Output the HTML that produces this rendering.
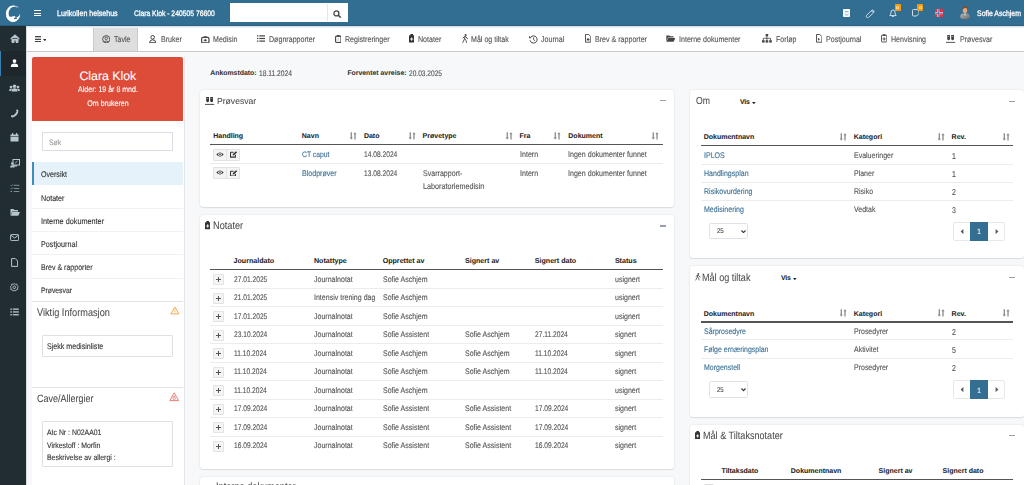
<!DOCTYPE html><html><head><meta charset="utf-8"><style>
html,body{margin:0;padding:0}
body{width:1024px;height:485px;overflow:hidden;position:relative;background:#f6f8fa;font-family:"Liberation Sans",sans-serif;text-rendering:geometricPrecision}
.t{position:absolute;white-space:nowrap;-webkit-text-stroke:0.12px currentColor}
.b{-webkit-text-stroke:0.05px currentColor}
.r{position:absolute;box-sizing:border-box}
</style></head><body>
<div class="r" style="left:0.00px;top:0.00px;width:1024.00px;height:26.00px;background:#326d92"></div>
<div class="r" style="left:0.00px;top:25.40px;width:1024.00px;height:1.20px;background:#285d80"></div>
<svg class="r" style="left:2px;top:2px" width="22" height="22" viewBox="2 2 22 22">
<defs><mask id="lm"><rect x="2" y="2" width="22" height="22" fill="#fff"/><path d="M13 13.6 L15.5 2 L26 2 L26 15 Z" fill="#000"/></mask>
<clipPath id="lc"><ellipse cx="13" cy="13.8" rx="7.1" ry="8.2"/></clipPath></defs>
<path fill="#fff" fill-rule="evenodd" mask="url(#lm)" d="M5.9 13.8 A7.1 8.2 0 1 0 20.1 13.8 A7.1 8.2 0 1 0 5.9 13.8Z M8.6 13.4 A5.5 6.7 0 1 0 19.6 13.4 A5.5 6.7 0 1 0 8.6 13.4Z"/>
<path fill="#fff" opacity="0.55" d="M13 5.6 Q16.5 5.6 18.6 7 L18.2 7.8 Q16 6.6 13 7Z"/>
<g clip-path="url(#lc)"><path fill="#fff" d="M4 16.6 Q6.5 16 9 16.6 Q11 17 13 16.2 Q14.5 15.7 15.5 16.6 L14.8 17.4 Q16.6 17.8 18.6 16.2 L20.5 14.8 L22 24 L4 24Z"/></g>
<ellipse cx="15.6" cy="18.3" rx="1.7" ry="0.75" fill="#346e93" transform="rotate(-12 15.6 18.3)"/>
</svg>
<div class="r" style="left:34.00px;top:10.00px;width:7.00px;height:1.20px;background:#fff"></div>
<div class="r" style="left:34.00px;top:12.60px;width:7.00px;height:1.20px;background:#fff"></div>
<div class="r" style="left:34.00px;top:15.20px;width:7.00px;height:1.20px;background:#fff"></div>
<div class="t" style="left:57.00px;top:9.20px;font-size:8.236px;line-height:10px;color:#fff;font-weight:normal;letter-spacing:0px;transform:scaleX(0.8621);transform-origin:0 50%;-webkit-text-stroke:0.3px #fff">Lurikollen helsehus</div>
<div class="t" style="left:134.00px;top:9.20px;font-size:7.888px;line-height:10px;color:#fff;font-weight:normal;letter-spacing:0px;transform:scaleX(0.8621);transform-origin:0 50%;-webkit-text-stroke:0.3px #fff">Clara Klok - 240505 76600</div>
<div class="r" style="left:230.00px;top:3.00px;width:118.00px;height:19.00px;background:#fff"></div>
<div class="r" style="left:326.50px;top:4.00px;width:0.80px;height:17.00px;background:#e6e6e6"></div>
<svg class="r" style="left:333.00px;top:9.50px;" width="9" height="8" viewBox="0 0 9 8"><circle cx="3.4" cy="3.4" r="2.5" fill="none" stroke="#444" stroke-width="1.3"/><path d="M5.2 5.2 L7.8 7.6" stroke="#444" stroke-width="1.5"/></svg>
<svg class="r" style="left:843.00px;top:9.00px;" width="7.2" height="8" viewBox="0 0 7.2 8"><rect x="0" y="0" width="7.2" height="7.9" rx="1" fill="#fff"/><rect x="2" y="2" width="3.5" height="1.1" fill="#8fb0c6"/><rect x="2" y="5.4" width="3.5" height="1" fill="#8fb0c6"/><rect x="0" y="3.9" width="7.2" height="0.5" fill="#c9d9e4"/></svg>
<svg class="r" style="left:864.50px;top:8.50px;" width="10" height="9" viewBox="0 0 10 9"><path d="M1.6 6.3 L6 1.9 Q7 0.6 8.3 1.2 L7 2.6 L7.6 3.2 L8.8 1.9 Q9.4 3.3 8 4.2 L3.6 8.4 Q2.6 9.2 1.6 8.3 Q0.8 7.3 1.6 6.3Z" fill="none" stroke="#dfe8ee" stroke-width="0.9"/></svg>
<svg class="r" style="left:888.50px;top:8.80px;" width="8" height="8.5" viewBox="0 0 8 8.5"><path d="M0.8 6.6 Q1.9 5.6 1.9 3.8 Q1.9 0.9 4 0.9 Q6.1 0.9 6.1 3.8 Q6.1 5.6 7.2 6.6 Z" fill="none" stroke="#e5edf2" stroke-width="0.9"/><circle cx="4" cy="7.6" r="0.8" fill="#e5edf2"/></svg>
<div class="r" style="left:894.70px;top:4.10px;width:6.10px;height:6.70px;background:#f39c12;border-radius:1px"></div>
<svg class="r" style="left:896.30px;top:5.60px;" width="3" height="3.6" viewBox="0 0 3 3.6"><ellipse cx="1.5" cy="1.8" rx="1" ry="1.3" fill="none" stroke="#fff" stroke-width="0.8"/></svg>
<svg class="r" style="left:911.80px;top:9.00px;" width="7.5" height="7.5" viewBox="0 0 7.5 7.5"><path d="M1.5 0.5 H6 Q7 0.5 7 1.5 V4.6 L4.6 7 H1.5 Q0.5 7 0.5 6 V1.5 Q0.5 0.5 1.5 0.5Z" fill="none" stroke="#e5edf2" stroke-width="0.9"/></svg>
<div class="r" style="left:917.10px;top:4.10px;width:6.00px;height:6.70px;background:#f39c12;border-radius:1px"></div>
<svg class="r" style="left:918.60px;top:5.60px;" width="3" height="3.6" viewBox="0 0 3 3.6"><ellipse cx="1.5" cy="1.8" rx="1" ry="1.3" fill="none" stroke="#fff" stroke-width="0.8"/></svg>
<svg class="r" style="left:934.80px;top:8.80px;" width="8.2" height="8.3" viewBox="0 0 8.2 8.3"><rect width="8.2" height="8.3" fill="#ef2a44"/><rect x="2.2" y="0" width="2" height="8.3" fill="#fff"/><rect x="0" y="3.2" width="8.2" height="2" fill="#fff"/><rect x="2.8" y="0" width="0.8" height="8.3" fill="#2a3f80"/><rect x="0" y="3.8" width="8.2" height="0.8" fill="#2a3f80"/></svg>
<svg class="r" style="left:960.40px;top:6.00px;" width="10" height="13" viewBox="0 0 10 13"><defs><linearGradient id="suit" x1="0" y1="0" x2="1" y2="1"><stop offset="0" stop-color="#b5b5b5"/><stop offset="1" stop-color="#6e6e6e"/></linearGradient></defs>
<path d="M0.2 11 Q0.2 7.6 3 7.2 L5 8.5 L7 7.2 Q9.8 7.6 9.8 11 Q9.8 13 5 13 Q0.2 13 0.2 11Z" fill="url(#suit)"/><path d="M4 7.6 L5 10 L6 7.6Z" fill="#e8e8e8"/>
<ellipse cx="5" cy="4.2" rx="2.2" ry="2.9" fill="#eaa77c"/><path d="M2.6 3.9 Q2.4 0.2 5.3 0.3 Q8.2 0.5 7.6 3.6 Q7.2 2 5.4 2.1 Q3.4 2 2.6 3.9Z" fill="#8b4a22"/></svg>
<div class="t" style="left:977.00px;top:9.40px;font-size:8.062px;line-height:10px;color:#fff;font-weight:normal;letter-spacing:0px;transform:scaleX(0.8621);transform-origin:0 50%;-webkit-text-stroke:0.3px #fff">Sofie Aschjem</div>
<div class="r" style="left:0.00px;top:26.00px;width:26.00px;height:459.00px;background:#222d32"></div>
<div class="r" style="left:0.00px;top:50.80px;width:26.00px;height:25.20px;background:#1e282c"></div>
<div class="r" style="left:0.00px;top:50.80px;width:1.30px;height:25.20px;background:#3580b0"></div>
<div class="r" style="left:26.00px;top:26.00px;width:1.30px;height:459.00px;background:#d9dcdf"></div>
<svg class="r" style="left:9.70px;top:34.20px;" width="10" height="9" viewBox="0 0 10 9"><path d="M0.5 4.8 L5 0.8 L9.5 4.8 M2 4 V8.5 H4 V6 H6 V8.5 H8 V4" fill="#b8c7ce" stroke="#b8c7ce" stroke-width="1"/></svg>
<svg class="r" style="left:10.20px;top:58.80px;" width="9" height="9" viewBox="0 0 9 9"><circle cx="4.5" cy="2.1" r="1.9" fill="#fff"/><path d="M0.8 7.9 Q0.8 4.6 4.5 4.6 Q8.2 4.6 8.2 7.9Z" fill="#fff"/></svg>
<svg class="r" style="left:9.20px;top:84.20px;" width="11" height="8" viewBox="0 0 11 8"><circle cx="5.5" cy="2.2" r="1.8" fill="#b8c7ce"/><circle cx="2" cy="3" r="1.3" fill="#b8c7ce"/><circle cx="9" cy="3" r="1.3" fill="#b8c7ce"/><path d="M2.5 7.5 Q2.5 4.3 5.5 4.3 Q8.5 4.3 8.5 7.5Z M0 7 Q0 4.5 2 4.5 L3 4.8 L1.8 7Z M11 7 Q11 4.5 9 4.5 L8 4.8 L9.2 7Z" fill="#b8c7ce"/></svg>
<svg class="r" style="left:10.20px;top:108.60px;" width="9" height="9" viewBox="0 0 9 9"><path d="M1 7.5 Q0.8 6.6 1.8 6 L3 6.6 Q5.5 5 6.7 2.6 L6 1.2 Q6.6 0.3 7.6 0.6 Q9 1.6 8 4 Q6 7.8 2.3 8.6 Q1.4 8.6 1 7.5Z" fill="#b8c7ce"/></svg>
<svg class="r" style="left:10.20px;top:133.30px;" width="9" height="9" viewBox="0 0 9 9"><rect x="0.5" y="1.5" width="8" height="7" fill="#b8c7ce"/><rect x="2" y="0" width="1.2" height="2" fill="#b8c7ce"/><rect x="6" y="0" width="1.2" height="2" fill="#b8c7ce"/><rect x="0.5" y="3" width="8" height="0.6" fill="#222d32"/></svg>
<svg class="r" style="left:9.70px;top:158.60px;" width="10" height="9" viewBox="0 0 10 9"><rect x="3" y="0.5" width="6.5" height="5.5" fill="none" stroke="#b8c7ce" stroke-width="1"/><circle cx="2.3" cy="4.5" r="1.3" fill="#b8c7ce"/><path d="M0 8.5 Q0 6.2 2.3 6.2 L7 6.2 L7 7.5 L4.5 7.5 L4.5 8.5Z" fill="#b8c7ce"/><path d="M5 4.3 L7.5 2" stroke="#b8c7ce" stroke-width="0.8"/></svg>
<svg class="r" style="left:9.70px;top:183.50px;" width="10" height="8" viewBox="0 0 10 8"><path d="M0.5 1 L1.5 2 L3 0.3 M0.5 4.2 L1.5 5.2 L3 3.5" fill="none" stroke="#8a9aa3" stroke-width="0.7"/><rect x="3.8" y="0.8" width="5.5" height="0.9" fill="#8a9aa3"/><rect x="3.8" y="4" width="5.5" height="0.9" fill="#8a9aa3"/><rect x="0.5" y="7" width="1.6" height="1" fill="#8a9aa3"/><rect x="3.8" y="7" width="5.5" height="0.9" fill="#8a9aa3"/></svg>
<svg class="r" style="left:9.70px;top:208.00px;" width="10" height="8" viewBox="0 0 10 8"><path d="M0.5 1 H3.5 L4.5 2 H8 V3.5 H2.2 L0.5 7.5Z" fill="#b8c7ce"/><path d="M2.4 4 H10 L8.3 7.8 H0.6Z" fill="#b8c7ce"/></svg>
<svg class="r" style="left:10.20px;top:233.80px;" width="9" height="7" viewBox="0 0 9 7"><rect x="0.6" y="0.6" width="8" height="6" rx="0.8" fill="none" stroke="#b8c7ce" stroke-width="1"/><path d="M0.8 1.2 L4.6 4 L8.4 1.2" fill="none" stroke="#b8c7ce" stroke-width="1"/></svg>
<svg class="r" style="left:11.20px;top:257.70px;" width="7" height="9" viewBox="0 0 7 9"><path d="M0.6 0.6 H4.3 L6.6 2.9 V8.4 H0.6Z" fill="none" stroke="#b8c7ce" stroke-width="1"/></svg>
<svg class="r" style="left:10.20px;top:282.50px;" width="9" height="9" viewBox="0 0 9 9"><circle cx="4.3" cy="4.3" r="1.3" fill="none" stroke="#b8c7ce" stroke-width="0.9"/><path d="M4.3 0.5 L5.3 1.3 L6.8 1.1 L7.2 2.6 L8.2 3.6 L7.5 4.9 L7.7 6.4 L6.2 6.9 L5.2 8 L4.3 7.3 L3.1 8 L2.2 6.9 L0.8 6.4 L1 4.9 L0.4 3.6 L1.4 2.6 L1.8 1.1 L3.3 1.3Z" fill="none" stroke="#b8c7ce" stroke-width="0.9"/></svg>
<svg class="r" style="left:10.20px;top:308.00px;" width="9" height="8" viewBox="0 0 9 8"><rect x="0.3" y="0.5" width="1.6" height="1.3" fill="#b8c7ce"/><rect x="2.8" y="0.5" width="6" height="1.3" fill="#b8c7ce"/><rect x="0.3" y="3.3" width="1.6" height="1.3" fill="#b8c7ce"/><rect x="2.8" y="3.3" width="6" height="1.3" fill="#b8c7ce"/><rect x="0.3" y="6.1" width="1.6" height="1.3" fill="#b8c7ce"/><rect x="2.8" y="6.1" width="6" height="1.3" fill="#b8c7ce"/></svg>
<div class="r" style="left:27.30px;top:26.00px;width:996.70px;height:24.60px;background:#fff"></div>
<div class="r" style="left:27.30px;top:26.00px;width:996.70px;height:1.60px;background:linear-gradient(#d5dde3,#f4f6f8)"></div>
<div class="r" style="left:27.30px;top:50.60px;width:996.70px;height:1.40px;background:#c6c6c6"></div>
<div class="r" style="left:27.30px;top:52.00px;width:996.70px;height:1.20px;background:#fafbfc"></div>
<div class="r" style="left:93.20px;top:27.60px;width:45.00px;height:23.00px;background:#dedede;border-left:1px solid #cbcbcb;border-right:1px solid #cbcbcb"></div>
<div class="r" style="left:34.90px;top:36.00px;width:6.60px;height:1.00px;background:#444"></div>
<div class="r" style="left:34.90px;top:38.80px;width:6.60px;height:1.00px;background:#444"></div>
<div class="r" style="left:34.90px;top:41.00px;width:6.60px;height:1.00px;background:#444"></div>
<div class="r" style="left:34.90px;top:37.20px;width:6.60px;height:1.40px;background:#c8c8c8"></div>
<svg class="r" style="left:42.90px;top:38.90px;" width="3.6" height="2.4" viewBox="0 0 3.6 2.4"><path d="M0 0 H3.6 L1.8 2.2Z" fill="#333"/></svg>
<svg class="r" style="left:101.80px;top:34.60px;" width="8.5" height="8.5" viewBox="0 0 8.5 8.5"><circle cx="4.2" cy="4.2" r="3.6" fill="none" stroke="#444" stroke-width="0.9"/><circle cx="4.2" cy="3.3" r="1.3" fill="none" stroke="#444" stroke-width="0.8"/><path d="M1.9 6.9 Q4.2 4.9 6.5 6.9" fill="none" stroke="#444" stroke-width="0.8"/></svg>
<div class="t" style="left:113.60px;top:35.30px;font-size:8.236px;line-height:10px;color:#555;font-weight:normal;letter-spacing:0px;transform:scaleX(0.8621);transform-origin:0 50%;">Tavle</div>
<svg class="r" style="left:149.40px;top:34.70px;" width="7.5" height="8.2" viewBox="0 0 7.5 8.2"><circle cx="3.7" cy="2.3" r="1.8" fill="none" stroke="#444" stroke-width="1"/><path d="M0.6 7.7 Q0.6 4.8 3.7 4.8 Q6.8 4.8 6.8 7.7Z" fill="none" stroke="#444" stroke-width="1"/></svg>
<div class="t" style="left:160.50px;top:35.30px;font-size:8.236px;line-height:10px;color:#555;font-weight:normal;letter-spacing:0px;transform:scaleX(0.8621);transform-origin:0 50%;">Bruker</div>
<svg class="r" style="left:201.20px;top:35.60px;" width="8.6" height="7.6" viewBox="0 0 8.6 7.6"><rect x="0.65" y="1.45" width="7.3" height="5.5" rx="1.3" fill="none" stroke="#444" stroke-width="1.2"/><rect x="2.9" y="0.2" width="2.8" height="1.4" rx="0.4" fill="#444"/><path d="M4.3 3 V5.4 M2.7 4.2 H5.9" stroke="#444" stroke-width="1.1"/></svg>
<div class="t" style="left:213.20px;top:35.30px;font-size:8.236px;line-height:10px;color:#555;font-weight:normal;letter-spacing:0px;transform:scaleX(0.8621);transform-origin:0 50%;">Medisin</div>
<svg class="r" style="left:257.20px;top:34.90px;" width="8" height="7" viewBox="0 0 8 7"><g fill="#444"><rect x="0" y="0.3" width="1.4" height="1.2"/><rect x="2.3" y="0.3" width="5.7" height="1.2"/><rect x="0" y="2.9" width="1.4" height="1.2"/><rect x="2.3" y="2.9" width="5.7" height="1.2"/><rect x="0" y="5.5" width="1.4" height="1.2"/><rect x="2.3" y="5.5" width="5.7" height="1.2"/></g></svg>
<div class="t" style="left:268.90px;top:35.30px;font-size:8.236px;line-height:10px;color:#555;font-weight:normal;letter-spacing:0px;transform:scaleX(0.8621);transform-origin:0 50%;">Døgnrapporter</div>
<svg class="r" style="left:334.80px;top:34.90px;" width="6.6" height="8.1" viewBox="0 0 6.6 8.1"><rect x="0.6" y="1.1" width="5.4" height="6.4" rx="1" fill="none" stroke="#444" stroke-width="1.15"/><rect x="2" y="0" width="2.6" height="1.7" rx="0.5" fill="#444"/><path d="M3.3 3.2 V5.6" stroke="#999" stroke-width="0.6" fill="none"/><path d="M2 6.2 H4.6" stroke="#ccc" stroke-width="0.6"/></svg>
<div class="t" style="left:345.40px;top:35.30px;font-size:8.236px;line-height:10px;color:#555;font-weight:normal;letter-spacing:0px;transform:scaleX(0.8621);transform-origin:0 50%;">Registreringer</div>
<svg class="r" style="left:408.60px;top:34.40px;" width="5.5" height="8.7" viewBox="0 0 5.5 8.7"><rect x="0" y="1.3" width="5.4" height="7.3" rx="0.6" fill="#333"/><rect x="1.4" y="0" width="2.6" height="2" fill="#333"/><path d="M2.7 3.4 V6.8 M1.2 5.1 H4.2" stroke="#fff" stroke-width="0.9"/></svg>
<div class="t" style="left:418.40px;top:35.30px;font-size:8.236px;line-height:10px;color:#555;font-weight:normal;letter-spacing:0px;transform:scaleX(0.8621);transform-origin:0 50%;">Notater</div>
<svg class="r" style="left:461.80px;top:34.30px;" width="6.5" height="9" viewBox="0 0 6.5 9"><circle cx="3.6" cy="1.1" r="1" fill="#444"/><path d="M3.2 2.5 L2.3 5.4 L0.6 8.8 M2.6 4.4 L3.9 6.3 L4.6 8.8 M0.8 4.3 L2.2 2.8 L4 2.7 L5.2 4.6 L6.2 4.8" fill="none" stroke="#444" stroke-width="0.9"/></svg>
<div class="t" style="left:471.10px;top:35.30px;font-size:8.236px;line-height:10px;color:#555;font-weight:normal;letter-spacing:0px;transform:scaleX(0.8621);transform-origin:0 50%;">Mål og tiltak</div>
<svg class="r" style="left:529.00px;top:35.10px;" width="9" height="8.5" viewBox="0 0 9 8.5"><path d="M1.7 2.2 A3.6 3.6 0 1 1 1 5.3" fill="none" stroke="#444" stroke-width="1"/><path d="M0.2 0.8 L2.5 3.3 L0 3.2Z" fill="#444"/><path d="M4.6 2.4 V4.6 L6 5.8" fill="none" stroke="#444" stroke-width="0.9"/></svg>
<div class="t" style="left:541.20px;top:35.30px;font-size:8.236px;line-height:10px;color:#555;font-weight:normal;letter-spacing:0px;transform:scaleX(0.8621);transform-origin:0 50%;">Journal</div>
<svg class="r" style="left:584.80px;top:34.30px;" width="6.3" height="8.7" viewBox="0 0 6.3 8.7"><path d="M0.5 0.5 H3.7 L5.8 2.6 V8.2 H0.5Z" fill="none" stroke="#444" stroke-width="0.9"/><rect x="1.8" y="4.5" width="2.6" height="2" fill="#444"/></svg>
<div class="t" style="left:595.00px;top:35.30px;font-size:8.236px;line-height:10px;color:#555;font-weight:normal;letter-spacing:0px;transform:scaleX(0.8621);transform-origin:0 50%;">Brev &amp; rapporter</div>
<svg class="r" style="left:665.80px;top:35.10px;" width="9.5" height="7" viewBox="0 0 9.5 7"><path d="M0.3 0.4 H3.3 L4.2 1.3 H7.5 V2.5 H2 L0.3 6.5Z" fill="#444"/><path d="M2.2 3 H9.4 L7.6 6.7 H0.4Z" fill="#444"/></svg>
<div class="t" style="left:679.20px;top:35.30px;font-size:8.236px;line-height:10px;color:#555;font-weight:normal;letter-spacing:0px;transform:scaleX(0.8621);transform-origin:0 50%;">Interne dokumenter</div>
<svg class="r" style="left:761.80px;top:34.40px;" width="10" height="8.7" viewBox="0 0 10 8.7"><g fill="#444"><rect x="3.6" y="0" width="2.6" height="2.4"/><rect x="0" y="6.2" width="2.6" height="2.4"/><rect x="3.6" y="6.2" width="2.6" height="2.4"/><rect x="7.2" y="6.2" width="2.6" height="2.4"/></g><path d="M4.9 2.4 V6.2 M1.3 6.2 V4.3 H8.5 V6.2" fill="none" stroke="#444" stroke-width="0.8"/></svg>
<div class="t" style="left:775.70px;top:35.30px;font-size:8.236px;line-height:10px;color:#555;font-weight:normal;letter-spacing:0px;transform:scaleX(0.8621);transform-origin:0 50%;">Forløp</div>
<svg class="r" style="left:815.50px;top:34.30px;" width="6.5" height="8.7" viewBox="0 0 6.5 8.7"><path d="M0.5 0.5 H3.8 L5.9 2.6 V8.2 H0.5Z" fill="none" stroke="#444" stroke-width="0.9"/><path d="M2 3.8 L4 5.3 L2 6.8Z" fill="#444"/></svg>
<div class="t" style="left:825.80px;top:35.30px;font-size:8.236px;line-height:10px;color:#555;font-weight:normal;letter-spacing:0px;transform:scaleX(0.8621);transform-origin:0 50%;">Postjournal</div>
<svg class="r" style="left:881.00px;top:34.40px;" width="6.3" height="8.5" viewBox="0 0 6.3 8.5"><rect x="0.5" y="1.2" width="5.3" height="6.8" rx="0.6" fill="none" stroke="#444" stroke-width="0.9"/><rect x="1.8" y="0.3" width="2.7" height="1.6" fill="#444"/><path d="M3.15 3.3 V6.6 M1.6 4.95 H4.7" stroke="#444" stroke-width="0.9"/></svg>
<div class="t" style="left:891.40px;top:35.30px;font-size:8.236px;line-height:10px;color:#555;font-weight:normal;letter-spacing:0px;transform:scaleX(0.8621);transform-origin:0 50%;">Henvisning</div>
<svg class="r" style="left:946.10px;top:34.50px;" width="10" height="9" viewBox="0 0 10 9"><g fill="#444"><path d="M1.2 0 H4 V4.3 Q2.6 6.3 1.2 4.3Z"/><path d="M5.2 0 H8 V4.3 Q6.6 6.3 5.2 4.3Z"/><rect x="0" y="6.9" width="9.2" height="0.9"/></g><rect x="1.8" y="1.2" width="1.6" height="0.7" fill="#fff" opacity="0.6"/><rect x="5.8" y="1.2" width="1.6" height="0.7" fill="#fff" opacity="0.6"/></svg>
<div class="t" style="left:959.70px;top:35.30px;font-size:8.236px;line-height:10px;color:#555;font-weight:normal;letter-spacing:0px;transform:scaleX(0.8621);transform-origin:0 50%;">Prøvesvar</div>
<div class="r" style="left:32.00px;top:57.00px;width:152.80px;height:433.00px;background:#fff;border-right:1.6px solid #e4e6ea"></div>
<div class="r" style="left:32.00px;top:57.00px;width:151.20px;height:63.80px;background:#dd4b39;border-radius:2px 2px 0 0"></div>
<div class="t" style="left:-42.20px;width:300px;text-align:center;top:68.58px;font-size:12.300px;line-height:14px;color:#fff;font-weight:normal;letter-spacing:0px;transform:scaleX(1.0000);transform-origin:50% 50%;">Clara Klok</div>
<div class="t" style="left:-42.50px;width:300px;text-align:center;top:84.50px;font-size:8.178px;line-height:10px;color:#fff;font-weight:normal;letter-spacing:0px;transform:scaleX(0.8621);transform-origin:50% 50%;">Alder: 19 år 8 mnd.</div>
<div class="t" style="left:-42.50px;width:300px;text-align:center;top:98.90px;font-size:8.236px;line-height:10px;color:#fff;font-weight:normal;letter-spacing:0px;transform:scaleX(0.8621);transform-origin:50% 50%;">Om brukeren</div>
<div class="r" style="left:42.30px;top:132.00px;width:130.50px;height:19.00px;border:1px solid #dadde3"></div>
<div class="t" style="left:49.20px;top:137.50px;font-size:8.004px;line-height:10px;color:#9a9a9a;font-weight:normal;letter-spacing:0px;transform:scaleX(0.8621);transform-origin:0 50%;">Søk</div>
<div class="r" style="left:32.00px;top:162.20px;width:151.20px;height:22.70px;background:#e6f2fa"></div>
<div class="r" style="left:32.00px;top:162.20px;width:1.80px;height:22.70px;background:#3c8dbc"></div>
<div class="t" style="left:41.30px;top:169.60px;font-size:8.236px;line-height:10px;color:#333;font-weight:normal;letter-spacing:0px;transform:scaleX(0.8621);transform-origin:0 50%;">Oversikt</div>
<div class="t" style="left:41.30px;top:192.70px;font-size:8.317px;line-height:10px;color:#333;font-weight:normal;letter-spacing:0px;transform:scaleX(0.8621);transform-origin:0 50%;">Notater</div>
<div class="t" style="left:41.30px;top:216.10px;font-size:8.456px;line-height:10px;color:#333;font-weight:normal;letter-spacing:0px;transform:scaleX(0.8621);transform-origin:0 50%;">Interne dokumenter</div>
<div class="t" style="left:41.30px;top:239.30px;font-size:8.352px;line-height:10px;color:#333;font-weight:normal;letter-spacing:0px;transform:scaleX(0.8621);transform-origin:0 50%;">Postjournal</div>
<div class="t" style="left:41.30px;top:262.50px;font-size:8.178px;line-height:10px;color:#333;font-weight:normal;letter-spacing:0px;transform:scaleX(0.8621);transform-origin:0 50%;">Brev &amp; rapporter</div>
<div class="t" style="left:41.30px;top:285.90px;font-size:7.888px;line-height:10px;color:#333;font-weight:normal;letter-spacing:0px;transform:scaleX(0.8621);transform-origin:0 50%;">Prøvesvar</div>
<div class="r" style="left:32.00px;top:207.80px;width:151.20px;height:1.00px;background:#f1f1f1"></div>
<div class="r" style="left:32.00px;top:230.90px;width:151.20px;height:1.00px;background:#f1f1f1"></div>
<div class="r" style="left:32.00px;top:254.00px;width:151.20px;height:1.00px;background:#f1f1f1"></div>
<div class="r" style="left:32.00px;top:277.70px;width:151.20px;height:1.00px;background:#f1f1f1"></div>
<div class="r" style="left:32.00px;top:300.80px;width:151.20px;height:1.10px;background:#e3e3e3"></div>
<div class="t" style="left:37.00px;top:307.17px;font-size:10.764px;line-height:12px;color:#4a4a4a;font-weight:normal;letter-spacing:0px;transform:scaleX(0.8547);transform-origin:0 50%;-webkit-text-stroke:0.05px currentColor">Viktig Informasjon</div>
<svg class="r" style="left:169.50px;top:305.50px;" width="10" height="9" viewBox="0 0 10 9"><path d="M4.9 1 L8.9 7.9 H0.9Z" fill="none" stroke="#f7a540" stroke-width="0.95" stroke-linejoin="round"/><rect x="4.5" y="3.3" width="0.8" height="3" fill="#f7a540" opacity="0.8"/></svg>
<div class="r" style="left:42.30px;top:335.30px;width:130.70px;height:22.10px;border:1px solid #e0e0e0;border-radius:1px"></div>
<div class="t" style="left:47.40px;top:342.40px;font-size:8.236px;line-height:10px;color:#333;font-weight:normal;letter-spacing:0px;transform:scaleX(0.8621);transform-origin:0 50%;">Sjekk medisinliste</div>
<div class="r" style="left:32.00px;top:386.80px;width:151.20px;height:1.10px;background:#e3e3e3"></div>
<div class="t" style="left:37.00px;top:393.17px;font-size:10.530px;line-height:12px;color:#4a4a4a;font-weight:normal;letter-spacing:0px;transform:scaleX(0.8547);transform-origin:0 50%;-webkit-text-stroke:0.05px currentColor">Cave/Allergier</div>
<svg class="r" style="left:168.80px;top:391.50px;" width="10.5" height="10" viewBox="0 0 10.5 10"><path d="M5.2 0.8 L9.6 8.6 H0.8Z" fill="none" stroke="#e6695c" stroke-width="0.85" stroke-linejoin="round"/><ellipse cx="5.2" cy="5.9" rx="1.2" ry="1.7" fill="none" stroke="#e6695c" stroke-width="0.7"/><circle cx="5.1" cy="4.6" r="0.6" fill="#e6695c"/></svg>
<div class="r" style="left:42.30px;top:421.00px;width:130.70px;height:46.30px;border:1px solid #e0e0e0;border-radius:1px"></div>
<div class="t" style="left:47.40px;top:428.10px;font-size:8.004px;line-height:10px;color:#333;font-weight:normal;letter-spacing:0px;transform:scaleX(0.8621);transform-origin:0 50%;">Atc Nr : N02AA01</div>
<div class="t" style="left:47.40px;top:440.70px;font-size:8.004px;line-height:10px;color:#333;font-weight:normal;letter-spacing:0px;transform:scaleX(0.8621);transform-origin:0 50%;">Virkestoff : Morfin</div>
<div class="t" style="left:47.40px;top:453.00px;font-size:8.004px;line-height:10px;color:#333;font-weight:normal;letter-spacing:0px;transform:scaleX(0.8621);transform-origin:0 50%;">Beskrivelse av allergi :</div>
<div class="t b" style="left:210.20px;top:69.30px;font-size:6.920px;line-height:10px;color:#333;font-weight:bold;letter-spacing:0px;">Ankomstdato:</div>
<div class="t" style="left:258.50px;top:69.16px;font-size:8.174px;line-height:10px;color:#555;font-weight:normal;letter-spacing:0px;transform:scaleX(0.8197);transform-origin:0 50%;">18.11.2024</div>
<div class="t b" style="left:347.40px;top:69.30px;font-size:6.860px;line-height:10px;color:#333;font-weight:bold;letter-spacing:0px;">Forventet avreise:</div>
<div class="t" style="left:408.80px;top:69.16px;font-size:8.052px;line-height:10px;color:#555;font-weight:normal;letter-spacing:0px;transform:scaleX(0.8197);transform-origin:0 50%;">20.03.2025</div>
<div class="r" style="left:199.80px;top:90.00px;width:474.40px;height:117.00px;background:#fff;border-radius:3px;box-shadow:0 0 2px rgba(0,0,0,0.12),0 1px 1px rgba(0,0,0,0.08)"></div>
<svg class="r" style="left:205.20px;top:97.10px;" width="10" height="9" viewBox="0 0 10 9"><g fill="#333"><path d="M1.2 0 H4 V4.3 Q2.6 6.3 1.2 4.3Z"/><path d="M5.2 0 H8 V4.3 Q6.6 6.3 5.2 4.3Z"/><rect x="0" y="6.9" width="9.2" height="0.9"/></g><rect x="1.8" y="1.2" width="1.6" height="0.7" fill="#fff" opacity="0.6"/><rect x="5.8" y="1.2" width="1.6" height="0.7" fill="#fff" opacity="0.6"/></svg>
<div class="t" style="left:216.70px;top:94.82px;font-size:8.772px;line-height:12px;color:#4a4a4a;font-weight:normal;letter-spacing:0px;transform:scaleX(0.9804);transform-origin:0 50%;-webkit-text-stroke:0.05px currentColor">Prøvesvar</div>
<div class="r" style="left:660.20px;top:100.30px;width:6.20px;height:1.20px;background:#97a0b3"></div>
<div class="t b" style="left:213.20px;top:132.10px;font-size:7.000px;line-height:10px;color:#222;font-weight:bold;letter-spacing:0px;">Handling</div>
<div class="t b" style="left:301.80px;top:132.10px;font-size:7.000px;line-height:10px;color:#222;font-weight:bold;letter-spacing:0px;">Navn</div>
<div class="t b" style="left:363.90px;top:132.10px;font-size:7.000px;line-height:10px;color:#222;font-weight:bold;letter-spacing:0px;">Dato</div>
<div class="t b" style="left:422.60px;top:132.10px;font-size:7.000px;line-height:10px;color:#222;font-weight:bold;letter-spacing:0px;">Prøvetype</div>
<div class="t b" style="left:519.60px;top:132.10px;font-size:7.000px;line-height:10px;color:#222;font-weight:bold;letter-spacing:0px;">Fra</div>
<div class="t b" style="left:568.30px;top:132.10px;font-size:7.000px;line-height:10px;color:#222;font-weight:bold;letter-spacing:0px;">Dokument</div>
<svg class="r" style="left:349.20px;top:132.00px;" width="8" height="8" viewBox="0 0 8 8"><path d="M2.3 0.3 V6.8 M6 7.6 V1" fill="none" stroke="#8a8f94" stroke-width="1.35"/><path d="M0.6 5.6 L2.3 7.6 L4 5.6Z M4.3 2.2 L6 0.2 L7.7 2.2Z" fill="#8a8f94"/></svg>
<svg class="r" style="left:408.20px;top:132.00px;" width="8" height="8" viewBox="0 0 8 8"><path d="M2.3 0.3 V6.8 M6 7.6 V1" fill="none" stroke="#8a8f94" stroke-width="1.35"/><path d="M0.6 5.6 L2.3 7.6 L4 5.6Z M4.3 2.2 L6 0.2 L7.7 2.2Z" fill="#8a8f94"/></svg>
<svg class="r" style="left:504.80px;top:132.00px;" width="8" height="8" viewBox="0 0 8 8"><path d="M2.3 0.3 V6.8 M6 7.6 V1" fill="none" stroke="#8a8f94" stroke-width="1.35"/><path d="M0.6 5.6 L2.3 7.6 L4 5.6Z M4.3 2.2 L6 0.2 L7.7 2.2Z" fill="#8a8f94"/></svg>
<svg class="r" style="left:553.30px;top:132.00px;" width="8" height="8" viewBox="0 0 8 8"><path d="M2.3 0.3 V6.8 M6 7.6 V1" fill="none" stroke="#8a8f94" stroke-width="1.35"/><path d="M0.6 5.6 L2.3 7.6 L4 5.6Z M4.3 2.2 L6 0.2 L7.7 2.2Z" fill="#8a8f94"/></svg>
<svg class="r" style="left:651.10px;top:132.00px;" width="8" height="8" viewBox="0 0 8 8"><path d="M2.3 0.3 V6.8 M6 7.6 V1" fill="none" stroke="#8a8f94" stroke-width="1.35"/><path d="M0.6 5.6 L2.3 7.6 L4 5.6Z M4.3 2.2 L6 0.2 L7.7 2.2Z" fill="#8a8f94"/></svg>
<div class="r" style="left:210.20px;top:143.65px;width:452.80px;height:1.50px;background:#555"></div>
<div class="r" style="left:213.00px;top:148.80px;width:13.90px;height:11.80px;background:#f4f4f4;border:1px solid #e2e2e2;border-radius:1px 0 0 1px"></div>
<div class="r" style="left:226.20px;top:148.80px;width:13.60px;height:11.80px;background:#f4f4f4;border:1px solid #e2e2e2;border-radius:0 1px 1px 0"></div>
<svg class="r" style="left:216.00px;top:152.20px;" width="8" height="5.2" viewBox="0 0 8 5.2"><path d="M0.3 2.6 Q4 -1.4 7.7 2.6 Q4 6.6 0.3 2.6Z" fill="#333"/><ellipse cx="4" cy="2.6" rx="2" ry="1.4" fill="#f4f4f4"/><circle cx="4" cy="2.6" r="0.9" fill="#555"/></svg>
<svg class="r" style="left:230.00px;top:151.40px;" width="7.6" height="6.6" viewBox="0 0 7.6 6.6"><path d="M0.5 1.2 H3.6 M0.5 1.2 V6.1 H5.4 V3.8" fill="none" stroke="#333" stroke-width="1.1"/><path d="M2.6 4.4 L2.9 3.1 L6 0.2 L7.2 1.3 L4 4.3Z" fill="#333"/></svg>
<div class="t" style="left:301.80px;top:150.20px;font-size:7.888px;line-height:10px;color:#3b6f94;font-weight:normal;letter-spacing:0px;transform:scaleX(0.8621);transform-origin:0 50%;">CT caput</div>
<div class="t" style="left:363.90px;top:150.06px;font-size:8.113px;line-height:10px;color:#555;font-weight:normal;letter-spacing:0px;transform:scaleX(0.8197);transform-origin:0 50%;">14.08.2024</div>
<div class="t" style="left:519.60px;top:150.20px;font-size:8.236px;line-height:10px;color:#555;font-weight:normal;letter-spacing:0px;transform:scaleX(0.8621);transform-origin:0 50%;">Intern</div>
<div class="t" style="left:568.30px;top:150.20px;font-size:8.236px;line-height:10px;color:#555;font-weight:normal;letter-spacing:0px;transform:scaleX(0.8621);transform-origin:0 50%;">Ingen dokumenter funnet</div>
<div class="r" style="left:210.20px;top:162.70px;width:452.80px;height:1.00px;background:#ececec"></div>
<div class="r" style="left:213.00px;top:167.00px;width:13.90px;height:11.80px;background:#f4f4f4;border:1px solid #e2e2e2;border-radius:1px 0 0 1px"></div>
<div class="r" style="left:226.20px;top:167.00px;width:13.60px;height:11.80px;background:#f4f4f4;border:1px solid #e2e2e2;border-radius:0 1px 1px 0"></div>
<svg class="r" style="left:216.00px;top:170.40px;" width="8" height="5.2" viewBox="0 0 8 5.2"><path d="M0.3 2.6 Q4 -1.4 7.7 2.6 Q4 6.6 0.3 2.6Z" fill="#333"/><ellipse cx="4" cy="2.6" rx="2" ry="1.4" fill="#f4f4f4"/><circle cx="4" cy="2.6" r="0.9" fill="#555"/></svg>
<svg class="r" style="left:230.00px;top:169.60px;" width="7.6" height="6.6" viewBox="0 0 7.6 6.6"><path d="M0.5 1.2 H3.6 M0.5 1.2 V6.1 H5.4 V3.8" fill="none" stroke="#333" stroke-width="1.1"/><path d="M2.6 4.4 L2.9 3.1 L6 0.2 L7.2 1.3 L4 4.3Z" fill="#333"/></svg>
<div class="t" style="left:301.80px;top:168.90px;font-size:8.236px;line-height:10px;color:#3b6f94;font-weight:normal;letter-spacing:0px;transform:scaleX(0.8621);transform-origin:0 50%;">Blodprøver</div>
<div class="t" style="left:363.90px;top:168.76px;font-size:8.113px;line-height:10px;color:#555;font-weight:normal;letter-spacing:0px;transform:scaleX(0.8197);transform-origin:0 50%;">13.08.2024</div>
<div class="t" style="left:422.60px;top:168.50px;font-size:8.236px;line-height:10px;color:#555;font-weight:normal;letter-spacing:0px;transform:scaleX(0.8621);transform-origin:0 50%;">Svarrapport-</div>
<div class="t" style="left:422.60px;top:180.60px;font-size:8.375px;line-height:10px;color:#555;font-weight:normal;letter-spacing:0px;transform:scaleX(0.8621);transform-origin:0 50%;">Laboratoriemedisin</div>
<div class="t" style="left:519.60px;top:168.90px;font-size:8.236px;line-height:10px;color:#555;font-weight:normal;letter-spacing:0px;transform:scaleX(0.8621);transform-origin:0 50%;">Intern</div>
<div class="t" style="left:568.30px;top:168.90px;font-size:8.236px;line-height:10px;color:#555;font-weight:normal;letter-spacing:0px;transform:scaleX(0.8621);transform-origin:0 50%;">Ingen dokumenter funnet</div>
<div class="r" style="left:199.80px;top:215.00px;width:474.40px;height:254.00px;background:#fff;border-radius:3px;box-shadow:0 0 2px rgba(0,0,0,0.12),0 1px 1px rgba(0,0,0,0.08)"></div>
<svg class="r" style="left:205.00px;top:221.40px;" width="5.4" height="8.4" viewBox="0 0 5.4 8.4"><rect x="0" y="1.3" width="5.4" height="7" rx="0.6" fill="#333"/><rect x="1.4" y="0" width="2.6" height="2" fill="#333"/><path d="M2.7 3.3 V6.7 M1.2 5 H4.2" stroke="#fff" stroke-width="0.9"/></svg>
<div class="t" style="left:212.50px;top:220.07px;font-size:10.764px;line-height:12px;color:#4a4a4a;font-weight:normal;letter-spacing:0px;transform:scaleX(0.8547);transform-origin:0 50%;-webkit-text-stroke:0.05px currentColor">Notater</div>
<div class="r" style="left:660.20px;top:225.40px;width:6.20px;height:1.20px;background:#97a0b3"></div>
<div class="t b" style="left:233.60px;top:255.70px;font-size:7.100px;line-height:10px;color:#222;font-weight:bold;letter-spacing:0px;">Journaldato</div>
<div class="t b" style="left:314.00px;top:255.70px;font-size:7.100px;line-height:10px;color:#222;font-weight:bold;letter-spacing:0px;">Notattype</div>
<div class="t b" style="left:382.70px;top:255.70px;font-size:7.100px;line-height:10px;color:#222;font-weight:bold;letter-spacing:0px;">Opprettet av</div>
<div class="t b" style="left:465.00px;top:255.70px;font-size:7.100px;line-height:10px;color:#222;font-weight:bold;letter-spacing:0px;">Signert av</div>
<div class="t b" style="left:534.80px;top:255.70px;font-size:7.100px;line-height:10px;color:#222;font-weight:bold;letter-spacing:0px;">Signert dato</div>
<div class="t b" style="left:614.90px;top:255.70px;font-size:7.100px;line-height:10px;color:#222;font-weight:bold;letter-spacing:0px;">Status</div>
<div class="r" style="left:210.20px;top:268.65px;width:452.80px;height:1.50px;background:#555"></div>
<div class="r" style="left:213.10px;top:274.00px;width:10.80px;height:11.40px;background:#f5f5f5;border:1px solid #e3e3e3;border-radius:1px"></div>
<div class="r" style="left:215.90px;top:279.25px;width:5.20px;height:1.20px;background:#555"></div>
<div class="r" style="left:217.90px;top:277.20px;width:1.20px;height:5.30px;background:#555"></div>
<div class="t" style="left:233.60px;top:274.66px;font-size:8.113px;line-height:10px;color:#555;font-weight:normal;letter-spacing:0px;transform:scaleX(0.8197);transform-origin:0 50%;">27.01.2025</div>
<div class="t" style="left:314.00px;top:274.80px;font-size:8.178px;line-height:10px;color:#555;font-weight:normal;letter-spacing:0px;transform:scaleX(0.8621);transform-origin:0 50%;">Journalnotat</div>
<div class="t" style="left:382.70px;top:274.80px;font-size:8.178px;line-height:10px;color:#555;font-weight:normal;letter-spacing:0px;transform:scaleX(0.8621);transform-origin:0 50%;">Sofie Aschjem</div>
<div class="t" style="left:614.90px;top:274.80px;font-size:8.178px;line-height:10px;color:#555;font-weight:normal;letter-spacing:0px;transform:scaleX(0.8621);transform-origin:0 50%;">usignert</div>
<div class="r" style="left:210.20px;top:287.90px;width:452.80px;height:1.00px;background:#ececec"></div>
<div class="r" style="left:213.10px;top:292.50px;width:10.80px;height:11.40px;background:#f5f5f5;border:1px solid #e3e3e3;border-radius:1px"></div>
<div class="r" style="left:215.90px;top:297.75px;width:5.20px;height:1.20px;background:#555"></div>
<div class="r" style="left:217.90px;top:295.70px;width:1.20px;height:5.30px;background:#555"></div>
<div class="t" style="left:233.60px;top:293.16px;font-size:8.113px;line-height:10px;color:#555;font-weight:normal;letter-spacing:0px;transform:scaleX(0.8197);transform-origin:0 50%;">21.01.2025</div>
<div class="t" style="left:314.00px;top:293.30px;font-size:8.178px;line-height:10px;color:#555;font-weight:normal;letter-spacing:0px;transform:scaleX(0.8621);transform-origin:0 50%;">Intensiv trening dag</div>
<div class="t" style="left:382.70px;top:293.30px;font-size:8.178px;line-height:10px;color:#555;font-weight:normal;letter-spacing:0px;transform:scaleX(0.8621);transform-origin:0 50%;">Sofie Aschjem</div>
<div class="t" style="left:614.90px;top:293.30px;font-size:8.178px;line-height:10px;color:#555;font-weight:normal;letter-spacing:0px;transform:scaleX(0.8621);transform-origin:0 50%;">usignert</div>
<div class="r" style="left:210.20px;top:306.40px;width:452.80px;height:1.00px;background:#ececec"></div>
<div class="r" style="left:213.10px;top:311.00px;width:10.80px;height:11.40px;background:#f5f5f5;border:1px solid #e3e3e3;border-radius:1px"></div>
<div class="r" style="left:215.90px;top:316.25px;width:5.20px;height:1.20px;background:#555"></div>
<div class="r" style="left:217.90px;top:314.20px;width:1.20px;height:5.30px;background:#555"></div>
<div class="t" style="left:233.60px;top:311.66px;font-size:8.113px;line-height:10px;color:#555;font-weight:normal;letter-spacing:0px;transform:scaleX(0.8197);transform-origin:0 50%;">17.01.2025</div>
<div class="t" style="left:314.00px;top:311.80px;font-size:8.178px;line-height:10px;color:#555;font-weight:normal;letter-spacing:0px;transform:scaleX(0.8621);transform-origin:0 50%;">Journalnotat</div>
<div class="t" style="left:382.70px;top:311.80px;font-size:8.178px;line-height:10px;color:#555;font-weight:normal;letter-spacing:0px;transform:scaleX(0.8621);transform-origin:0 50%;">Sofie Aschjem</div>
<div class="t" style="left:614.90px;top:311.80px;font-size:8.178px;line-height:10px;color:#555;font-weight:normal;letter-spacing:0px;transform:scaleX(0.8621);transform-origin:0 50%;">usignert</div>
<div class="r" style="left:210.20px;top:324.90px;width:452.80px;height:1.00px;background:#ececec"></div>
<div class="r" style="left:213.10px;top:329.50px;width:10.80px;height:11.40px;background:#f5f5f5;border:1px solid #e3e3e3;border-radius:1px"></div>
<div class="r" style="left:215.90px;top:334.75px;width:5.20px;height:1.20px;background:#555"></div>
<div class="r" style="left:217.90px;top:332.70px;width:1.20px;height:5.30px;background:#555"></div>
<div class="t" style="left:233.60px;top:330.16px;font-size:8.113px;line-height:10px;color:#555;font-weight:normal;letter-spacing:0px;transform:scaleX(0.8197);transform-origin:0 50%;">23.10.2024</div>
<div class="t" style="left:314.00px;top:330.30px;font-size:8.178px;line-height:10px;color:#555;font-weight:normal;letter-spacing:0px;transform:scaleX(0.8621);transform-origin:0 50%;">Journalnotat</div>
<div class="t" style="left:382.70px;top:330.30px;font-size:8.178px;line-height:10px;color:#555;font-weight:normal;letter-spacing:0px;transform:scaleX(0.8621);transform-origin:0 50%;">Sofie Assistent</div>
<div class="t" style="left:465.00px;top:330.30px;font-size:8.178px;line-height:10px;color:#555;font-weight:normal;letter-spacing:0px;transform:scaleX(0.8621);transform-origin:0 50%;">Sofie Aschjem</div>
<div class="t" style="left:534.80px;top:330.16px;font-size:8.113px;line-height:10px;color:#555;font-weight:normal;letter-spacing:0px;transform:scaleX(0.8197);transform-origin:0 50%;">27.11.2024</div>
<div class="t" style="left:614.90px;top:330.30px;font-size:8.178px;line-height:10px;color:#555;font-weight:normal;letter-spacing:0px;transform:scaleX(0.8621);transform-origin:0 50%;">signert</div>
<div class="r" style="left:210.20px;top:343.40px;width:452.80px;height:1.00px;background:#ececec"></div>
<div class="r" style="left:213.10px;top:348.00px;width:10.80px;height:11.40px;background:#f5f5f5;border:1px solid #e3e3e3;border-radius:1px"></div>
<div class="r" style="left:215.90px;top:353.25px;width:5.20px;height:1.20px;background:#555"></div>
<div class="r" style="left:217.90px;top:351.20px;width:1.20px;height:5.30px;background:#555"></div>
<div class="t" style="left:233.60px;top:348.66px;font-size:8.113px;line-height:10px;color:#555;font-weight:normal;letter-spacing:0px;transform:scaleX(0.8197);transform-origin:0 50%;">11.10.2024</div>
<div class="t" style="left:314.00px;top:348.80px;font-size:8.178px;line-height:10px;color:#555;font-weight:normal;letter-spacing:0px;transform:scaleX(0.8621);transform-origin:0 50%;">Journalnotat</div>
<div class="t" style="left:382.70px;top:348.80px;font-size:8.178px;line-height:10px;color:#555;font-weight:normal;letter-spacing:0px;transform:scaleX(0.8621);transform-origin:0 50%;">Sofie Aschjem</div>
<div class="t" style="left:465.00px;top:348.80px;font-size:8.178px;line-height:10px;color:#555;font-weight:normal;letter-spacing:0px;transform:scaleX(0.8621);transform-origin:0 50%;">Sofie Aschjem</div>
<div class="t" style="left:534.80px;top:348.66px;font-size:8.113px;line-height:10px;color:#555;font-weight:normal;letter-spacing:0px;transform:scaleX(0.8197);transform-origin:0 50%;">11.10.2024</div>
<div class="t" style="left:614.90px;top:348.80px;font-size:8.178px;line-height:10px;color:#555;font-weight:normal;letter-spacing:0px;transform:scaleX(0.8621);transform-origin:0 50%;">signert</div>
<div class="r" style="left:210.20px;top:361.90px;width:452.80px;height:1.00px;background:#ececec"></div>
<div class="r" style="left:213.10px;top:366.50px;width:10.80px;height:11.40px;background:#f5f5f5;border:1px solid #e3e3e3;border-radius:1px"></div>
<div class="r" style="left:215.90px;top:371.75px;width:5.20px;height:1.20px;background:#555"></div>
<div class="r" style="left:217.90px;top:369.70px;width:1.20px;height:5.30px;background:#555"></div>
<div class="t" style="left:233.60px;top:367.16px;font-size:8.113px;line-height:10px;color:#555;font-weight:normal;letter-spacing:0px;transform:scaleX(0.8197);transform-origin:0 50%;">11.10.2024</div>
<div class="t" style="left:314.00px;top:367.30px;font-size:8.178px;line-height:10px;color:#555;font-weight:normal;letter-spacing:0px;transform:scaleX(0.8621);transform-origin:0 50%;">Journalnotat</div>
<div class="t" style="left:382.70px;top:367.30px;font-size:8.178px;line-height:10px;color:#555;font-weight:normal;letter-spacing:0px;transform:scaleX(0.8621);transform-origin:0 50%;">Sofie Aschjem</div>
<div class="t" style="left:465.00px;top:367.30px;font-size:8.178px;line-height:10px;color:#555;font-weight:normal;letter-spacing:0px;transform:scaleX(0.8621);transform-origin:0 50%;">Sofie Aschjem</div>
<div class="t" style="left:534.80px;top:367.16px;font-size:8.113px;line-height:10px;color:#555;font-weight:normal;letter-spacing:0px;transform:scaleX(0.8197);transform-origin:0 50%;">11.10.2024</div>
<div class="t" style="left:614.90px;top:367.30px;font-size:8.178px;line-height:10px;color:#555;font-weight:normal;letter-spacing:0px;transform:scaleX(0.8621);transform-origin:0 50%;">signert</div>
<div class="r" style="left:210.20px;top:380.40px;width:452.80px;height:1.00px;background:#ececec"></div>
<div class="r" style="left:213.10px;top:385.00px;width:10.80px;height:11.40px;background:#f5f5f5;border:1px solid #e3e3e3;border-radius:1px"></div>
<div class="r" style="left:215.90px;top:390.25px;width:5.20px;height:1.20px;background:#555"></div>
<div class="r" style="left:217.90px;top:388.20px;width:1.20px;height:5.30px;background:#555"></div>
<div class="t" style="left:233.60px;top:385.66px;font-size:8.113px;line-height:10px;color:#555;font-weight:normal;letter-spacing:0px;transform:scaleX(0.8197);transform-origin:0 50%;">11.10.2024</div>
<div class="t" style="left:314.00px;top:385.80px;font-size:8.178px;line-height:10px;color:#555;font-weight:normal;letter-spacing:0px;transform:scaleX(0.8621);transform-origin:0 50%;">Journalnotat</div>
<div class="t" style="left:382.70px;top:385.80px;font-size:8.178px;line-height:10px;color:#555;font-weight:normal;letter-spacing:0px;transform:scaleX(0.8621);transform-origin:0 50%;">Sofie Aschjem</div>
<div class="t" style="left:614.90px;top:385.80px;font-size:8.178px;line-height:10px;color:#555;font-weight:normal;letter-spacing:0px;transform:scaleX(0.8621);transform-origin:0 50%;">usignert</div>
<div class="r" style="left:210.20px;top:398.90px;width:452.80px;height:1.00px;background:#ececec"></div>
<div class="r" style="left:213.10px;top:403.50px;width:10.80px;height:11.40px;background:#f5f5f5;border:1px solid #e3e3e3;border-radius:1px"></div>
<div class="r" style="left:215.90px;top:408.75px;width:5.20px;height:1.20px;background:#555"></div>
<div class="r" style="left:217.90px;top:406.70px;width:1.20px;height:5.30px;background:#555"></div>
<div class="t" style="left:233.60px;top:404.16px;font-size:8.113px;line-height:10px;color:#555;font-weight:normal;letter-spacing:0px;transform:scaleX(0.8197);transform-origin:0 50%;">17.09.2024</div>
<div class="t" style="left:314.00px;top:404.30px;font-size:8.178px;line-height:10px;color:#555;font-weight:normal;letter-spacing:0px;transform:scaleX(0.8621);transform-origin:0 50%;">Journalnotat</div>
<div class="t" style="left:382.70px;top:404.30px;font-size:8.178px;line-height:10px;color:#555;font-weight:normal;letter-spacing:0px;transform:scaleX(0.8621);transform-origin:0 50%;">Sofie Assistent</div>
<div class="t" style="left:465.00px;top:404.30px;font-size:8.178px;line-height:10px;color:#555;font-weight:normal;letter-spacing:0px;transform:scaleX(0.8621);transform-origin:0 50%;">Sofie Assistent</div>
<div class="t" style="left:534.80px;top:404.16px;font-size:8.113px;line-height:10px;color:#555;font-weight:normal;letter-spacing:0px;transform:scaleX(0.8197);transform-origin:0 50%;">17.09.2024</div>
<div class="t" style="left:614.90px;top:404.30px;font-size:8.178px;line-height:10px;color:#555;font-weight:normal;letter-spacing:0px;transform:scaleX(0.8621);transform-origin:0 50%;">signert</div>
<div class="r" style="left:210.20px;top:417.40px;width:452.80px;height:1.00px;background:#ececec"></div>
<div class="r" style="left:213.10px;top:422.00px;width:10.80px;height:11.40px;background:#f5f5f5;border:1px solid #e3e3e3;border-radius:1px"></div>
<div class="r" style="left:215.90px;top:427.25px;width:5.20px;height:1.20px;background:#555"></div>
<div class="r" style="left:217.90px;top:425.20px;width:1.20px;height:5.30px;background:#555"></div>
<div class="t" style="left:233.60px;top:422.66px;font-size:8.113px;line-height:10px;color:#555;font-weight:normal;letter-spacing:0px;transform:scaleX(0.8197);transform-origin:0 50%;">17.09.2024</div>
<div class="t" style="left:314.00px;top:422.80px;font-size:8.178px;line-height:10px;color:#555;font-weight:normal;letter-spacing:0px;transform:scaleX(0.8621);transform-origin:0 50%;">Journalnotat</div>
<div class="t" style="left:382.70px;top:422.80px;font-size:8.178px;line-height:10px;color:#555;font-weight:normal;letter-spacing:0px;transform:scaleX(0.8621);transform-origin:0 50%;">Sofie Assistent</div>
<div class="t" style="left:465.00px;top:422.80px;font-size:8.178px;line-height:10px;color:#555;font-weight:normal;letter-spacing:0px;transform:scaleX(0.8621);transform-origin:0 50%;">Sofie Assistent</div>
<div class="t" style="left:534.80px;top:422.66px;font-size:8.113px;line-height:10px;color:#555;font-weight:normal;letter-spacing:0px;transform:scaleX(0.8197);transform-origin:0 50%;">17.09.2024</div>
<div class="t" style="left:614.90px;top:422.80px;font-size:8.178px;line-height:10px;color:#555;font-weight:normal;letter-spacing:0px;transform:scaleX(0.8621);transform-origin:0 50%;">signert</div>
<div class="r" style="left:210.20px;top:435.90px;width:452.80px;height:1.00px;background:#ececec"></div>
<div class="r" style="left:213.10px;top:440.50px;width:10.80px;height:11.40px;background:#f5f5f5;border:1px solid #e3e3e3;border-radius:1px"></div>
<div class="r" style="left:215.90px;top:445.75px;width:5.20px;height:1.20px;background:#555"></div>
<div class="r" style="left:217.90px;top:443.70px;width:1.20px;height:5.30px;background:#555"></div>
<div class="t" style="left:233.60px;top:441.16px;font-size:8.113px;line-height:10px;color:#555;font-weight:normal;letter-spacing:0px;transform:scaleX(0.8197);transform-origin:0 50%;">16.09.2024</div>
<div class="t" style="left:314.00px;top:441.30px;font-size:8.178px;line-height:10px;color:#555;font-weight:normal;letter-spacing:0px;transform:scaleX(0.8621);transform-origin:0 50%;">Journalnotat</div>
<div class="t" style="left:382.70px;top:441.30px;font-size:8.178px;line-height:10px;color:#555;font-weight:normal;letter-spacing:0px;transform:scaleX(0.8621);transform-origin:0 50%;">Sofie Assistent</div>
<div class="t" style="left:465.00px;top:441.30px;font-size:8.178px;line-height:10px;color:#555;font-weight:normal;letter-spacing:0px;transform:scaleX(0.8621);transform-origin:0 50%;">Sofie Assistent</div>
<div class="t" style="left:534.80px;top:441.16px;font-size:8.113px;line-height:10px;color:#555;font-weight:normal;letter-spacing:0px;transform:scaleX(0.8197);transform-origin:0 50%;">16.09.2024</div>
<div class="t" style="left:614.90px;top:441.30px;font-size:8.178px;line-height:10px;color:#555;font-weight:normal;letter-spacing:0px;transform:scaleX(0.8621);transform-origin:0 50%;">signert</div>
<div class="r" style="left:199.80px;top:477.00px;width:474.40px;height:18.00px;background:#fff;border-radius:3px;box-shadow:0 0 2px rgba(0,0,0,0.12),0 1px 1px rgba(0,0,0,0.08)"></div>
<div class="t" style="left:215.60px;top:480.77px;font-size:10.764px;line-height:12px;color:#4a4a4a;font-weight:normal;letter-spacing:0px;transform:scaleX(0.8547);transform-origin:0 50%;-webkit-text-stroke:0.05px currentColor">Interne dokumenter</div>
<div class="r" style="left:689.80px;top:90.00px;width:333.80px;height:167.80px;background:#fff;border-radius:3px;box-shadow:0 0 2px rgba(0,0,0,0.12),0 1px 1px rgba(0,0,0,0.08)"></div>
<div class="t" style="left:695.50px;top:96.17px;font-size:10.179px;line-height:12px;color:#4a4a4a;font-weight:normal;letter-spacing:0px;transform:scaleX(0.8547);transform-origin:0 50%;-webkit-text-stroke:0.05px currentColor">Om</div>
<div class="t b" style="left:739.90px;top:97.80px;font-size:6.900px;line-height:10px;color:#222;font-weight:bold;letter-spacing:0px;letter-spacing:-0.2px">Vis</div>
<svg class="r" style="left:751.50px;top:101.60px;" width="4" height="3" viewBox="0 0 4 3"><path d="M0 0 H3.6 L1.8 2.2Z" fill="#222"/></svg>
<div class="r" style="left:1009.20px;top:100.60px;width:6.20px;height:1.20px;background:#97a0b3"></div>
<div class="t b" style="left:703.70px;top:132.80px;font-size:7.000px;line-height:10px;color:#222;font-weight:bold;letter-spacing:0px;">Dokumentnavn</div>
<div class="t b" style="left:853.70px;top:132.80px;font-size:7.000px;line-height:10px;color:#222;font-weight:bold;letter-spacing:0px;">Kategori</div>
<div class="t b" style="left:951.60px;top:132.80px;font-size:7.000px;line-height:10px;color:#222;font-weight:bold;letter-spacing:0px;">Rev.</div>
<svg class="r" style="left:839.00px;top:133.00px;" width="8" height="8" viewBox="0 0 8 8"><path d="M2.3 0.3 V6.8 M6 7.6 V1" fill="none" stroke="#8a8f94" stroke-width="1.35"/><path d="M0.6 5.6 L2.3 7.6 L4 5.6Z M4.3 2.2 L6 0.2 L7.7 2.2Z" fill="#8a8f94"/></svg>
<svg class="r" style="left:936.80px;top:133.00px;" width="8" height="8" viewBox="0 0 8 8"><path d="M2.3 0.3 V6.8 M6 7.6 V1" fill="none" stroke="#8a8f94" stroke-width="1.35"/><path d="M0.6 5.6 L2.3 7.6 L4 5.6Z M4.3 2.2 L6 0.2 L7.7 2.2Z" fill="#8a8f94"/></svg>
<svg class="r" style="left:1001.80px;top:133.00px;" width="8" height="8" viewBox="0 0 8 8"><path d="M2.3 0.3 V6.8 M6 7.6 V1" fill="none" stroke="#8a8f94" stroke-width="1.35"/><path d="M0.6 5.6 L2.3 7.6 L4 5.6Z M4.3 2.2 L6 0.2 L7.7 2.2Z" fill="#8a8f94"/></svg>
<div class="r" style="left:700.70px;top:144.55px;width:312.40px;height:1.50px;background:#555"></div>
<div class="t" style="left:703.70px;top:151.20px;font-size:8.178px;line-height:10px;color:#3b6f94;font-weight:normal;letter-spacing:0px;transform:scaleX(0.8621);transform-origin:0 50%;">IPLOS</div>
<div class="t" style="left:853.70px;top:151.20px;font-size:8.120px;line-height:10px;color:#555;font-weight:normal;letter-spacing:0px;transform:scaleX(0.8621);transform-origin:0 50%;">Evalueringer</div>
<div class="t" style="left:951.60px;top:151.05px;font-size:8.540px;line-height:10px;color:#555;font-weight:normal;letter-spacing:0px;transform:scaleX(0.8197);transform-origin:0 50%;">1</div>
<div class="t" style="left:703.70px;top:169.00px;font-size:8.178px;line-height:10px;color:#3b6f94;font-weight:normal;letter-spacing:0px;transform:scaleX(0.8621);transform-origin:0 50%;">Handlingsplan</div>
<div class="t" style="left:853.70px;top:169.00px;font-size:8.120px;line-height:10px;color:#555;font-weight:normal;letter-spacing:0px;transform:scaleX(0.8621);transform-origin:0 50%;">Planer</div>
<div class="t" style="left:951.60px;top:168.85px;font-size:8.540px;line-height:10px;color:#555;font-weight:normal;letter-spacing:0px;transform:scaleX(0.8197);transform-origin:0 50%;">1</div>
<div class="t" style="left:703.70px;top:186.80px;font-size:8.178px;line-height:10px;color:#3b6f94;font-weight:normal;letter-spacing:0px;transform:scaleX(0.8621);transform-origin:0 50%;">Risikovurdering</div>
<div class="t" style="left:853.70px;top:186.80px;font-size:8.120px;line-height:10px;color:#555;font-weight:normal;letter-spacing:0px;transform:scaleX(0.8621);transform-origin:0 50%;">Risiko</div>
<div class="t" style="left:951.60px;top:186.65px;font-size:8.540px;line-height:10px;color:#555;font-weight:normal;letter-spacing:0px;transform:scaleX(0.8197);transform-origin:0 50%;">2</div>
<div class="t" style="left:703.70px;top:204.80px;font-size:8.178px;line-height:10px;color:#3b6f94;font-weight:normal;letter-spacing:0px;transform:scaleX(0.8621);transform-origin:0 50%;">Medisinering</div>
<div class="t" style="left:853.70px;top:204.80px;font-size:8.120px;line-height:10px;color:#555;font-weight:normal;letter-spacing:0px;transform:scaleX(0.8621);transform-origin:0 50%;">Vedtak</div>
<div class="t" style="left:951.60px;top:204.65px;font-size:8.540px;line-height:10px;color:#555;font-weight:normal;letter-spacing:0px;transform:scaleX(0.8197);transform-origin:0 50%;">3</div>
<div class="r" style="left:700.70px;top:163.90px;width:312.40px;height:1.00px;background:#ececec"></div>
<div class="r" style="left:700.70px;top:181.60px;width:312.40px;height:1.00px;background:#ececec"></div>
<div class="r" style="left:700.70px;top:199.70px;width:312.40px;height:1.00px;background:#ececec"></div>
<div class="r" style="left:708.60px;top:223.30px;width:39.90px;height:16.10px;border:1px solid #dfe3e9;background:#fff;border-radius:1.5px"></div>
<div class="t" style="left:716.70px;top:227.27px;font-size:6.900px;line-height:10px;color:#444;font-weight:normal;letter-spacing:0px;transform:scaleX(0.8696);transform-origin:0 50%;">25</div>
<svg class="r" style="left:740.80px;top:229.85px;" width="5" height="3.5" viewBox="0 0 5 3.5"><path d="M0.5 0.5 L2.5 2.6 L4.5 0.5" fill="none" stroke="#333" stroke-width="1.1"/></svg>
<div class="r" style="left:953.40px;top:221.90px;width:51.70px;height:19.00px;border:1px solid #e8e8e8;border-radius:2px;background:#fff"></div>
<div class="r" style="left:970.30px;top:221.90px;width:17.80px;height:19.00px;background:#346e93"></div>
<svg class="r" style="left:960.00px;top:228.80px;" width="4" height="5.2" viewBox="0 0 4 5.2"><path d="M3.4 0 V5.2 L0.6 2.6Z" fill="#555"/></svg>
<svg class="r" style="left:994.60px;top:228.80px;" width="4" height="5.2" viewBox="0 0 4 5.2"><path d="M0.6 0 V5.2 L3.4 2.6Z" fill="#555"/></svg>
<div class="t" style="left:829.20px;width:300px;text-align:center;top:227.30px;font-size:7.540px;line-height:10px;color:#fff;font-weight:normal;letter-spacing:0px;transform:scaleX(0.8621);transform-origin:50% 50%;">1</div>
<div class="r" style="left:689.80px;top:266.00px;width:333.80px;height:150.60px;background:#fff;border-radius:3px;box-shadow:0 0 2px rgba(0,0,0,0.12),0 1px 1px rgba(0,0,0,0.08)"></div>
<svg class="r" style="left:694.70px;top:273.40px;" width="6" height="7.5" viewBox="0 0 6 7.5"><circle cx="3.3" cy="0.9" r="0.85" fill="#444"/><path d="M3 2.1 L2.1 4.6 L0.6 7.4 M2.5 3.8 L3.6 5.4 L4.2 7.4 M0.7 3.7 L2 2.4 L3.6 2.3 L4.6 3.9 L5.6 4.1" fill="none" stroke="#444" stroke-width="0.8"/></svg>
<div class="t" style="left:701.90px;top:271.87px;font-size:10.647px;line-height:12px;color:#4a4a4a;font-weight:normal;letter-spacing:0px;transform:scaleX(0.8547);transform-origin:0 50%;-webkit-text-stroke:0.05px currentColor">Mål og tiltak</div>
<div class="t b" style="left:780.90px;top:273.90px;font-size:6.900px;line-height:10px;color:#222;font-weight:bold;letter-spacing:0px;letter-spacing:-0.2px">Vis</div>
<svg class="r" style="left:792.50px;top:277.70px;" width="4" height="3" viewBox="0 0 4 3"><path d="M0 0 H3.6 L1.8 2.2Z" fill="#222"/></svg>
<div class="r" style="left:1009.20px;top:277.00px;width:6.20px;height:1.20px;background:#97a0b3"></div>
<div class="t b" style="left:703.70px;top:309.70px;font-size:7.000px;line-height:10px;color:#222;font-weight:bold;letter-spacing:0px;">Dokumentnavn</div>
<div class="t b" style="left:853.70px;top:309.70px;font-size:7.000px;line-height:10px;color:#222;font-weight:bold;letter-spacing:0px;">Kategori</div>
<div class="t b" style="left:951.60px;top:309.70px;font-size:7.000px;line-height:10px;color:#222;font-weight:bold;letter-spacing:0px;">Rev.</div>
<svg class="r" style="left:839.00px;top:309.40px;" width="8" height="8" viewBox="0 0 8 8"><path d="M2.3 0.3 V6.8 M6 7.6 V1" fill="none" stroke="#8a8f94" stroke-width="1.35"/><path d="M0.6 5.6 L2.3 7.6 L4 5.6Z M4.3 2.2 L6 0.2 L7.7 2.2Z" fill="#8a8f94"/></svg>
<svg class="r" style="left:936.80px;top:309.40px;" width="8" height="8" viewBox="0 0 8 8"><path d="M2.3 0.3 V6.8 M6 7.6 V1" fill="none" stroke="#8a8f94" stroke-width="1.35"/><path d="M0.6 5.6 L2.3 7.6 L4 5.6Z M4.3 2.2 L6 0.2 L7.7 2.2Z" fill="#8a8f94"/></svg>
<svg class="r" style="left:1001.80px;top:309.40px;" width="8" height="8" viewBox="0 0 8 8"><path d="M2.3 0.3 V6.8 M6 7.6 V1" fill="none" stroke="#8a8f94" stroke-width="1.35"/><path d="M0.6 5.6 L2.3 7.6 L4 5.6Z M4.3 2.2 L6 0.2 L7.7 2.2Z" fill="#8a8f94"/></svg>
<div class="r" style="left:700.70px;top:321.05px;width:312.40px;height:1.50px;background:#555"></div>
<div class="t" style="left:703.70px;top:327.30px;font-size:8.120px;line-height:10px;color:#3b6f94;font-weight:normal;letter-spacing:0px;transform:scaleX(0.8621);transform-origin:0 50%;">Sårprosedyre</div>
<div class="t" style="left:853.70px;top:327.30px;font-size:8.120px;line-height:10px;color:#555;font-weight:normal;letter-spacing:0px;transform:scaleX(0.8621);transform-origin:0 50%;">Prosedyrer</div>
<div class="t" style="left:951.60px;top:327.15px;font-size:8.540px;line-height:10px;color:#555;font-weight:normal;letter-spacing:0px;transform:scaleX(0.8197);transform-origin:0 50%;">2</div>
<div class="t" style="left:703.70px;top:345.10px;font-size:8.120px;line-height:10px;color:#3b6f94;font-weight:normal;letter-spacing:0px;transform:scaleX(0.8621);transform-origin:0 50%;">Følge ernæringsplan</div>
<div class="t" style="left:853.70px;top:345.10px;font-size:8.120px;line-height:10px;color:#555;font-weight:normal;letter-spacing:0px;transform:scaleX(0.8621);transform-origin:0 50%;">Aktivitet</div>
<div class="t" style="left:951.60px;top:344.95px;font-size:8.540px;line-height:10px;color:#555;font-weight:normal;letter-spacing:0px;transform:scaleX(0.8197);transform-origin:0 50%;">5</div>
<div class="t" style="left:703.70px;top:363.20px;font-size:8.120px;line-height:10px;color:#3b6f94;font-weight:normal;letter-spacing:0px;transform:scaleX(0.8621);transform-origin:0 50%;">Morgenstell</div>
<div class="t" style="left:853.70px;top:363.20px;font-size:8.120px;line-height:10px;color:#555;font-weight:normal;letter-spacing:0px;transform:scaleX(0.8621);transform-origin:0 50%;">Prosedyrer</div>
<div class="t" style="left:951.60px;top:363.05px;font-size:8.540px;line-height:10px;color:#555;font-weight:normal;letter-spacing:0px;transform:scaleX(0.8197);transform-origin:0 50%;">2</div>
<div class="r" style="left:700.70px;top:339.30px;width:312.40px;height:1.00px;background:#ececec"></div>
<div class="r" style="left:700.70px;top:357.70px;width:312.40px;height:1.00px;background:#ececec"></div>
<div class="r" style="left:708.60px;top:381.40px;width:39.90px;height:16.40px;border:1px solid #dfe3e9;background:#fff;border-radius:1.5px"></div>
<div class="t" style="left:716.70px;top:385.52px;font-size:6.900px;line-height:10px;color:#444;font-weight:normal;letter-spacing:0px;transform:scaleX(0.8696);transform-origin:0 50%;">25</div>
<svg class="r" style="left:740.80px;top:388.10px;" width="5" height="3.5" viewBox="0 0 5 3.5"><path d="M0.5 0.5 L2.5 2.6 L4.5 0.5" fill="none" stroke="#333" stroke-width="1.1"/></svg>
<div class="r" style="left:953.40px;top:380.40px;width:51.70px;height:19.00px;border:1px solid #e8e8e8;border-radius:2px;background:#fff"></div>
<div class="r" style="left:970.30px;top:380.40px;width:17.80px;height:19.00px;background:#346e93"></div>
<svg class="r" style="left:960.00px;top:387.30px;" width="4" height="5.2" viewBox="0 0 4 5.2"><path d="M3.4 0 V5.2 L0.6 2.6Z" fill="#555"/></svg>
<svg class="r" style="left:994.60px;top:387.30px;" width="4" height="5.2" viewBox="0 0 4 5.2"><path d="M0.6 0 V5.2 L3.4 2.6Z" fill="#555"/></svg>
<div class="t" style="left:829.20px;width:300px;text-align:center;top:385.80px;font-size:7.540px;line-height:10px;color:#fff;font-weight:normal;letter-spacing:0px;transform:scaleX(0.8621);transform-origin:50% 50%;">1</div>
<div class="r" style="left:689.80px;top:424.70px;width:333.80px;height:70.30px;background:#fff;border-radius:3px;box-shadow:0 0 2px rgba(0,0,0,0.12),0 1px 1px rgba(0,0,0,0.08)"></div>
<svg class="r" style="left:695.20px;top:431.20px;" width="5.3" height="8.2" viewBox="0 0 5.3 8.2"><rect x="0" y="1.3" width="5.3" height="6.9" rx="0.6" fill="#333"/><rect x="1.35" y="0" width="2.6" height="2" fill="#333"/><path d="M2.65 3.3 V6.6 M1.2 4.95 H4.1" stroke="#fff" stroke-width="0.9"/></svg>
<div class="t" style="left:702.60px;top:429.77px;font-size:10.647px;line-height:12px;color:#4a4a4a;font-weight:normal;letter-spacing:0px;transform:scaleX(0.8547);transform-origin:0 50%;-webkit-text-stroke:0.05px currentColor">Mål &amp; Tiltaksnotater</div>
<div class="r" style="left:1009.30px;top:434.80px;width:6.20px;height:1.20px;background:#97a0b3"></div>
<div class="t b" style="left:721.50px;top:467.30px;font-size:7.000px;line-height:10px;color:#222;font-weight:bold;letter-spacing:0px;">Tiltaksdato</div>
<div class="t b" style="left:790.80px;top:467.30px;font-size:7.000px;line-height:10px;color:#222;font-weight:bold;letter-spacing:0px;">Dokumentnavn</div>
<div class="t b" style="left:878.60px;top:467.30px;font-size:7.000px;line-height:10px;color:#222;font-weight:bold;letter-spacing:0px;">Signert av</div>
<div class="t b" style="left:942.60px;top:467.30px;font-size:7.000px;line-height:10px;color:#222;font-weight:bold;letter-spacing:0px;">Signert dato</div>
<div class="r" style="left:700.70px;top:478.65px;width:312.50px;height:1.50px;background:#555"></div>
<div class="r" style="left:703.50px;top:483.50px;width:10.50px;height:11.50px;background:#f4f4f4;border:1px solid #ddd;border-radius:1px"></div>
</body></html>
